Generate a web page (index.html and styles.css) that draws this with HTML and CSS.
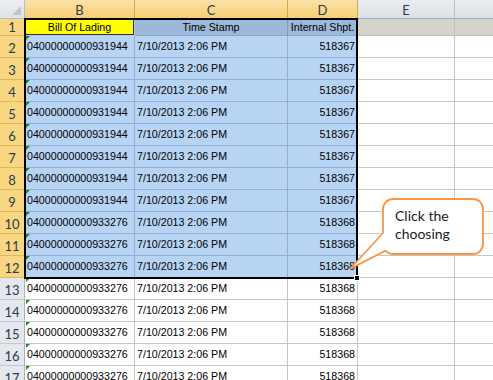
FILE: index.html
```html
<!DOCTYPE html>
<html>
<head>
<meta charset="utf-8">
<link rel="stylesheet" href="styles.css">
</head>
<body>
<div class="wrap">
  <div class="sheet">
    <div class="corner"></div>
    <div class="ch sel">B</div>
    <div class="ch sel">C</div>
    <div class="ch sel">D</div>
    <div class="ch">E</div>
    <div class="ch"></div>

    <div class="rh sel r1">1</div>
    <div class="c r1 active center">Bill Of Lading</div>
    <div class="c r1 selgray center">Time Stamp</div>
    <div class="c r1 selgray center">Internal Shpt.</div>
    <div class="c r1 gray"></div>
    <div class="c r1 gray"></div>

    <div class="rh sel">2</div><div class="c sel tri">04000000000931944</div><div class="c sel">7/10/2013 2:06 PM</div><div class="c sel num">518367</div><div class="c"></div><div class="c"></div>
    <div class="rh sel">3</div><div class="c sel tri">04000000000931944</div><div class="c sel">7/10/2013 2:06 PM</div><div class="c sel num">518367</div><div class="c"></div><div class="c"></div>
    <div class="rh sel">4</div><div class="c sel tri">04000000000931944</div><div class="c sel">7/10/2013 2:06 PM</div><div class="c sel num">518367</div><div class="c"></div><div class="c"></div>
    <div class="rh sel">5</div><div class="c sel tri">04000000000931944</div><div class="c sel">7/10/2013 2:06 PM</div><div class="c sel num">518367</div><div class="c"></div><div class="c"></div>
    <div class="rh sel">6</div><div class="c sel tri">04000000000931944</div><div class="c sel">7/10/2013 2:06 PM</div><div class="c sel num">518367</div><div class="c"></div><div class="c"></div>
    <div class="rh sel">7</div><div class="c sel tri">04000000000931944</div><div class="c sel">7/10/2013 2:06 PM</div><div class="c sel num">518367</div><div class="c"></div><div class="c"></div>
    <div class="rh sel">8</div><div class="c sel tri">04000000000931944</div><div class="c sel">7/10/2013 2:06 PM</div><div class="c sel num">518367</div><div class="c"></div><div class="c"></div>
    <div class="rh sel">9</div><div class="c sel tri">04000000000931944</div><div class="c sel">7/10/2013 2:06 PM</div><div class="c sel num">518367</div><div class="c"></div><div class="c"></div>
    <div class="rh sel">10</div><div class="c sel tri">04000000000933276</div><div class="c sel">7/10/2013 2:06 PM</div><div class="c sel num">518368</div><div class="c"></div><div class="c"></div>
    <div class="rh sel">11</div><div class="c sel tri">04000000000933276</div><div class="c sel">7/10/2013 2:06 PM</div><div class="c sel num">518368</div><div class="c"></div><div class="c"></div>
    <div class="rh sel">12</div><div class="c sel tri">04000000000933276</div><div class="c sel">7/10/2013 2:06 PM</div><div class="c sel num">518368</div><div class="c"></div><div class="c"></div>
    <div class="rh">13</div><div class="c tri">04000000000933276</div><div class="c">7/10/2013 2:06 PM</div><div class="c num">518368</div><div class="c"></div><div class="c"></div>
    <div class="rh">14</div><div class="c tri">04000000000933276</div><div class="c">7/10/2013 2:06 PM</div><div class="c num">518368</div><div class="c"></div><div class="c"></div>
    <div class="rh">15</div><div class="c tri">04000000000933276</div><div class="c">7/10/2013 2:06 PM</div><div class="c num">518368</div><div class="c"></div><div class="c"></div>
    <div class="rh">16</div><div class="c tri">04000000000933276</div><div class="c">7/10/2013 2:06 PM</div><div class="c num">518368</div><div class="c"></div><div class="c"></div>
    <div class="rh">17</div><div class="c tri">04000000000933276</div><div class="c">7/10/2013 2:06 PM</div><div class="c num">518368</div><div class="c"></div><div class="c"></div>
  </div>

  <div class="selection"><span class="handle"></span></div>

  <div class="callout">
    <svg class="bubble" width="140" height="76" viewBox="0 0 140 76">
      <path d="M45,2 H125 A10,10 0 0 1 135,12 V47 A10,10 0 0 1 125,57 H45 A10,10 0 0 1 37.5,53.6 L2,72 L35,36 V12 A10,10 0 0 1 45,2 Z" fill="#fff" stroke="#f79646" stroke-width="1.8" stroke-linejoin="round"/>
    </svg>
    <p class="callout-text">Click the<br>choosing</p>
  </div>
</div>
</body>
</html>
```

FILE: styles.css
```css
* {
  box-sizing: border-box;
  margin: 0;
  padding: 0;
}

body {
  width: 493px;
  height: 380px;
  overflow: hidden;
  background: #ffffff;
  font-family: "Liberation Sans", Arial, sans-serif;
}

.wrap {
  position: relative;
  width: 493px;
  height: 380px;
  overflow: hidden;
}

.sheet {
  display: grid;
  grid-template-columns: 25px 110px 153px 70px 97px 42px;
  grid-template-rows: 19px 17px repeat(16, 22px);
  width: 497px;
}

.sheet > div {
  position: relative;
  border-right: 1px solid #c6c6c6;
  border-bottom: 1px solid #c6c6c6;
  white-space: nowrap;
  overflow: hidden;
}

/* header corner */
.corner {
  background: linear-gradient(#eceef2, #dfe3e8);
  border-right-color: #b6bcc5 !important;
  border-bottom-color: #b6bcc5 !important;
}
.corner::after {
  content: "";
  position: absolute;
  right: 3px;
  bottom: 3px;
  width: 0;
  height: 0;
  border-left: 9px solid transparent;
  border-bottom: 9px solid #bfc5cd;
}

/* column headers */
.ch {
  background: linear-gradient(#eaedf1, #dce1e7);
  border-right-color: #b8bec6 !important;
  border-bottom-color: #9eb0c4 !important;
  font-family: Lato, "Open Sans", sans-serif;
  font-size: 13px;
  line-height: 18px;
  padding-top: 1px;
  text-align: center;
  color: #2b3a4d;
}
.ch.sel {
  background: linear-gradient(#fbe2a8, #f7cf72);
  border-right-color: #d9a748 !important;
  border-bottom-color: #d9a03a !important;
}

/* row headers */
.rh {
  background: #e4e7ec;
  border-right-color: #a9b3bf !important;
  border-bottom-color: #c4cad2 !important;
  font-family: Lato, "Open Sans", sans-serif;
  font-size: 13px;
  line-height: 21px;
  padding-top: 2px;
  text-align: center;
  color: #2b3a4d;
}
.rh.sel {
  background: #f9d682;
  border-bottom-color: #e3b75e !important;
}
.rh.r1 {
  line-height: 16px;
  padding-top: 0;
}

/* cells */
.c {
  background: #ffffff;
  font-size: 10.67px;
  line-height: 21px;
  padding: 0 2px;
  color: #000000;
}
.c.r1 {
  line-height: 16px;
}
.c.sel {
  background: #b8d4f4;
  border-right-color: #93aece;
  border-bottom-color: #93aece;
}
.c.selgray {
  background: #9db8d8;
  border-right-color: #7f9cc0;
  border-bottom-color: #8aa5c6;
}
.c.gray {
  background: #d6d2cc;
  border-right-color: #c2bfba;
  border-bottom-color: #c2bfba;
}
.c.active {
  background: #ffff00;
  box-shadow: inset 0 0 0 1px #1f2a80;
}
.c.center {
  text-align: center;
}
.c.num {
  text-align: right;
}
.c.tri::before {
  content: "";
  position: absolute;
  left: 1px;
  top: 0;
  width: 0;
  height: 0;
  border-top: 4px solid #1c8a1c;
  border-right: 4px solid transparent;
}

/* selection frame overlay */
.selection {
  position: absolute;
  left: 24px;
  top: 18px;
  width: 334px;
  height: 261px;
  border: 2px solid #000000;
  pointer-events: none;
}
.handle {
  position: absolute;
  right: -4px;
  bottom: -4px;
  width: 6px;
  height: 6px;
  background: #000000;
  border: 1px solid #ffffff;
}

/* callout */
.callout {
  position: absolute;
  left: 348px;
  top: 197px;
  width: 140px;
  height: 76px;
}
.bubble {
  display: block;
}
.callout-text {
  position: absolute;
  left: 47px;
  top: 10px;
  font-family: Lato, "Open Sans", sans-serif;
  font-size: 14px;
  line-height: 18px;
  color: #1a1a1a;
}
```
